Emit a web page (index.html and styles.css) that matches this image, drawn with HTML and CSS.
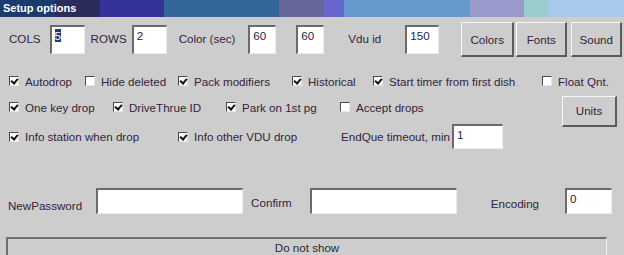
FILE: index.html
```html
<!DOCTYPE html>
<html>
<head>
<meta charset="utf-8">
<link rel="stylesheet" href="styles.css">
</head>
<body>
<div class="win">
  <div class="titlebar">Setup options</div>

  <div class="row r1">
    <span class="lbl l-cols">COLS</span>
    <div class="field f-cols"><span class="sel">5</span></div>
    <span class="lbl l-rows">ROWS</span>
    <div class="field f-rows">2</div>
    <span class="lbl l-color">Color (sec)</span>
    <div class="field f-c1">60</div>
    <div class="field f-c2">60</div>
    <span class="lbl l-vdu">Vdu id</span>
    <div class="field f-vdu">150</div>
    <div class="btn b-colors">Colors</div>
    <div class="btn b-fonts">Fonts</div>
    <div class="btn b-sound">Sound</div>
  </div>

  <div class="row r2">
    <label class="chk w76"><span class="box on"></span>Autodrop</label>
    <label class="chk w93"><span class="box"></span>Hide deleted</label>
    <label class="chk w114"><span class="box on"></span>Pack modifiers</label>
    <label class="chk w81"><span class="box on"></span>Historical</label>
    <label class="chk w169"><span class="box on"></span>Start timer from first dish</label>
    <label class="chk"><span class="box"></span>Float Qnt.</label>
  </div>

  <div class="row r3">
    <label class="chk w104"><span class="box on"></span>One key drop</label>
    <label class="chk w113"><span class="box on"></span>DriveThrue ID</label>
    <label class="chk w114"><span class="box on"></span>Park on 1st pg</label>
    <label class="chk"><span class="box"></span>Accept drops</label>
    <div class="btn b-units">Units</div>
  </div>

  <div class="row r4">
    <label class="chk w169"><span class="box on"></span>Info station when drop</label>
    <label class="chk w163"><span class="box on"></span>Info other VDU drop</label>
    <span class="lbl l-endq">EndQue timeout, min</span>
    <div class="field f-endq">1</div>
  </div>

  <div class="row r5">
    <span class="lbl l-pass">NewPassword</span>
    <div class="field f-pass"></div>
    <span class="lbl l-conf">Confirm</span>
    <div class="field f-conf"></div>
    <span class="lbl l-enc">Encoding</span>
    <div class="field f-enc">0</div>
  </div>

  <div class="panel">Do not show</div>
</div>
</body>
</html>
```

FILE: styles.css
```css
html, body {
  margin: 0;
  padding: 0;
  background: #cdcdcd;
}
.win {
  width: 624px;
  height: 255px;
  overflow: hidden;
  font-family: "Liberation Sans", Arial, sans-serif;
  font-size: 11.6px;
  color: #33243a;
  background: #cdcdcd;
}
.titlebar {
  height: 17px;
  line-height: 17px;
  padding-left: 3px;
  font-size: 11px;
  font-weight: bold;
  color: #ffffff;
  background: linear-gradient(to right,
    #1b3b6f 0, #1b3b6f 55px,
    #2c2c5c 55px, #2c2c5c 100px,
    #333399 100px, #333399 164px,
    #336699 164px, #336699 279px,
    #666699 279px, #666699 324px,
    #6666cc 324px, #6666cc 344px,
    #6699cc 344px, #6699cc 470px,
    #9999cc 470px, #9999cc 524px,
    #99cccc 524px, #99cccc 548px,
    #a8c8ee 548px, #a8c8ee 624px);
}
.row {
  display: flex;
  align-items: center;
}
.row > * {
  flex-shrink: 0;
  white-space: nowrap;
}
.r1 { height: 35px; margin-top: 5px; }
.r2 { height: 24px; margin-top: 12px; padding-left: 9px; }
.r3 { height: 24px; margin-top: 2px; padding-left: 9px; }
.r4 { height: 25px; margin-top: 5px; padding-left: 9px; }
.r5 { height: 26px; margin-top: 39px; }

.field {
  box-sizing: border-box;
  background: #ffffff;
  border-top: 2px solid #6a6a6a;
  border-left: 2px solid #6a6a6a;
  border-right: 1px solid #ececec;
  border-bottom: 1px solid #ececec;
  padding: 2px 0 0 3px;
  color: #1e1e40;
  line-height: 14px;
  align-self: center;
}
.sel {
  background: #13407e;
  color: #ffffff;
}
.r1 .field { height: 29px; }
.l-cols { margin-left: 9px; }
.f-cols { width: 35px; margin-left: 9px; }
.l-rows { margin-left: 6px; }
.f-rows { width: 35px; margin-left: 5px; }
.l-color { margin-left: 12px; }
.f-c1 { width: 28px; margin-left: 13px; }
.f-c2 { width: 28px; margin-left: 20px; }
.l-vdu { margin-left: 24px; }
.f-vdu { width: 34px; margin-left: 24px; }
.r1 .l-cols, .r1 .l-rows, .r1 .l-color, .r1 .l-vdu { margin-top: -2px; }

.btn {
  box-sizing: border-box;
  display: flex;
  align-items: center;
  justify-content: center;
  background: #cdcdcd;
  border-top: 1px solid #f6f6f6;
  border-left: 1px solid #f6f6f6;
  border-right: 2px solid #5a5a5a;
  border-bottom: 2px solid #5a5a5a;
  color: #33243a;
}
.b-colors { width: 53px; height: 35px; margin-left: 22px; }
.b-fonts { width: 51px; height: 35px; margin-left: 2px; }
.b-sound { width: 51px; height: 35px; margin-left: 4px; }
.b-units { width: 55px; height: 31px; margin-left: auto; margin-right: 7px; margin-top: 8px; }

.chk {
  display: flex;
  align-items: center;
}
.box {
  box-sizing: border-box;
  width: 10px;
  height: 10px;
  margin-right: 6px;
  background: #ffffff;
  border-top: 1px solid #4a4a4a;
  border-left: 1px solid #4a4a4a;
  border-right: 1px solid #e6e6e6;
  border-bottom: 1px solid #e6e6e6;
  position: relative;
}
.box.on::after {
  content: "";
  position: absolute;
  left: 2px;
  top: 0px;
  width: 3px;
  height: 5px;
  border-right: 2px solid #111;
  border-bottom: 2px solid #111;
  transform: rotate(40deg);
}
.w76 { width: 76px; }
.w81 { width: 81px; }
.w93 { width: 93px; }
.w104 { width: 104px; }
.w113 { width: 113px; }
.w114 { width: 114px; }
.w163 { width: 163px; }
.w169 { width: 169px; }

.f-endq { width: 51px; height: 25px; margin-left: 2px; }
.r5 .field { height: 26px; }
.l-pass { margin-left: 8px; padding-top: 9px; }
.f-pass { width: 147px; margin-left: 14px; }
.l-conf { margin-left: 8px; padding-top: 2px; }
.f-conf { width: 147px; margin-left: 18px; }
.l-enc { margin-left: 34px; padding-top: 5px; }
.f-enc { width: 47px; margin-left: 26px; }

.panel {
  box-sizing: border-box;
  margin: 23px 0 0 6px;
  width: 601px;
  height: 30px;
  border-top: 2px solid #6e6e6e;
  border-left: 2px solid #6e6e6e;
  border-right: 1px solid #f0f0f0;
  text-align: center;
  line-height: 18px;
  color: #2a2a2a;
}
```
